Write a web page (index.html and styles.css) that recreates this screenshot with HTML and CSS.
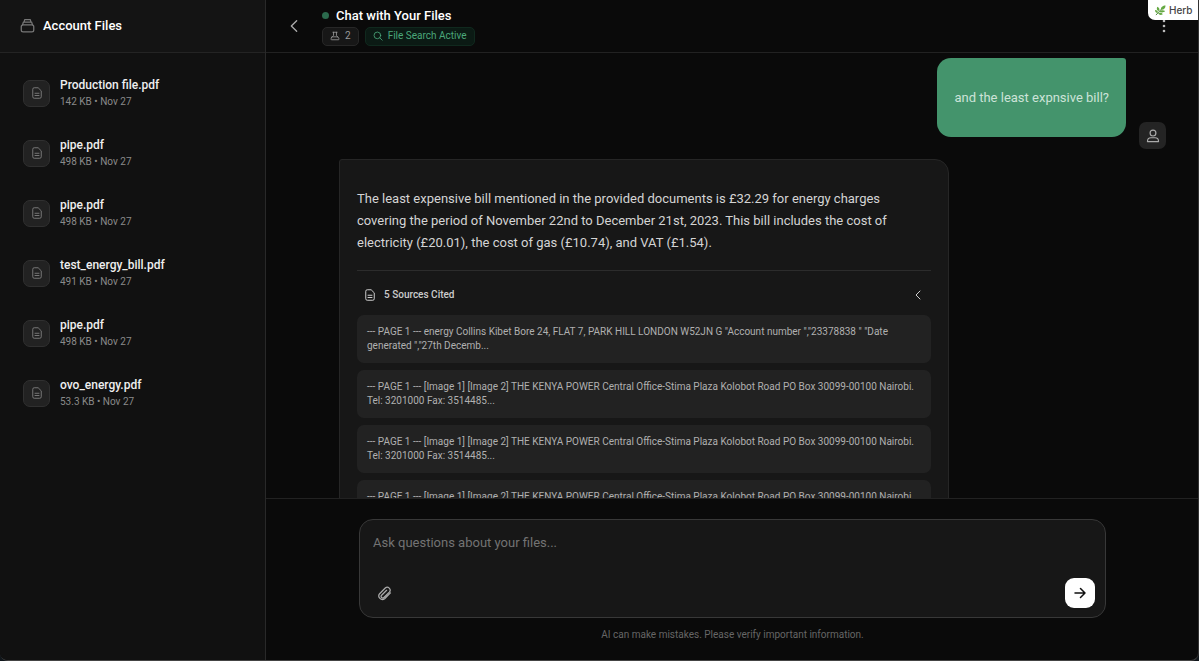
FILE: index.html
```html
<!DOCTYPE html>
<html lang="en">
<head>
<meta charset="utf-8">
<meta name="viewport" content="width=device-width, initial-scale=1">
<title>Chat with Your Files</title>
<link rel="stylesheet" href="styles.css">
</head>
<body>
<svg class="sprite" aria-hidden="true">
  <symbol id="doc" viewBox="0 0 24 24"><path d="M13.500 1.500H6.500a3 3 0 0 0-3 3v15a3 3 0 0 0 3 3h11a3 3 0 0 0 3-3v-11zM8 12.500h8M8 17h8"/></symbol>
  <symbol id="left" viewBox="0 0 24 24"><path d="M16 4L8 12l8 8"/></symbol>
</svg>
<div class="app">
  <aside class="sidebar">
    <header class="sidebar-head">
      <svg class="icon stack" viewBox="0 0 24 24"><rect x="2" y="11" width="20" height="11" rx="3"/><path d="M4 11l1.500-4.500h13L20 11M6.500 6.500l1-4h9l1 4"/></svg>
      <h2>Account Files</h2>
    </header>
    <ul class="files">
      <li class="file"><span class="file-icon"><svg class="icon"><use href="#doc"/></svg></span><div><p class="file-name">Production file.pdf</p><p class="file-meta">142 KB • Nov 27</p></div></li>
      <li class="file"><span class="file-icon"><svg class="icon"><use href="#doc"/></svg></span><div><p class="file-name">pipe.pdf</p><p class="file-meta">498 KB • Nov 27</p></div></li>
      <li class="file"><span class="file-icon"><svg class="icon"><use href="#doc"/></svg></span><div><p class="file-name">pipe.pdf</p><p class="file-meta">498 KB • Nov 27</p></div></li>
      <li class="file"><span class="file-icon"><svg class="icon"><use href="#doc"/></svg></span><div><p class="file-name">test_energy_bill.pdf</p><p class="file-meta">491 KB • Nov 27</p></div></li>
      <li class="file"><span class="file-icon"><svg class="icon"><use href="#doc"/></svg></span><div><p class="file-name">pipe.pdf</p><p class="file-meta">498 KB • Nov 27</p></div></li>
      <li class="file"><span class="file-icon"><svg class="icon"><use href="#doc"/></svg></span><div><p class="file-name">ovo_energy.pdf</p><p class="file-meta">53.3 KB • Nov 27</p></div></li>
    </ul>
  </aside>
  <main class="chat">
    <header class="chat-head">
      <button class="plain back" type="button" aria-label="Back"><svg class="icon"><use href="#left"/></svg></button>
      <div class="heading">
        <h1><span class="status"></span>Chat with Your Files</h1>
        <div class="badges">
          <span class="badge"><svg class="icon" viewBox="0 0 24 24"><path d="M7 3h10M8.500 3v7c0 2-1.500 3-3 4M15.500 3v7c0 2 1.500 3 3 4M5 14h14l2.500 4.500c.7 1.300 0 2.500-1.500 2.500H4c-1.500 0-2.200-1.200-1.500-2.500z"/></svg>2</span>
          <span class="badge active"><svg class="icon" viewBox="0 0 24 24"><circle cx="10.500" cy="10.500" r="8"/><path d="M16.500 16.500L22 22"/></svg>File Search Active</span>
        </div>
      </div>
      <button class="plain more" type="button" aria-label="More options"><svg viewBox="0 0 4 16"><circle cx="2" cy="3" r="1.300"/><circle cx="2" cy="8" r="1.300"/><circle cx="2" cy="13" r="1.300"/></svg></button>
    </header>
    <section class="messages">
      <div class="message user">
        <p class="bubble">and the least expnsive bill?</p>
        <span class="avatar"><svg class="icon" viewBox="0 0 24 24"><circle cx="12" cy="7" r="5"/><path d="M2.500 21.500c0-4.500 3-6.500 6-6.500h7c3 0 6 2 6 6.500z"/></svg></span>
      </div>
      <article class="answer">
        <p class="answer-text">The least expensive bill mentioned in the provided documents is £32.29 for energy charges covering the period of November 22nd to December 21st, 2023. This bill includes the cost of electricity (£20.01), the cost of gas (£10.74), and VAT (£1.54).</p>
        <div class="sources">
          <button class="plain sources-head" type="button"><svg class="icon"><use href="#doc"/></svg><span>5 Sources Cited</span><svg class="icon"><use href="#left"/></svg></button>
          <ul class="source-list">
            <li>--- PAGE 1 --- energy Collins Kibet Bore 24, FLAT 7, PARK HILL LONDON W52JN G "Account number ","23378838 " "Date generated ","27th Decemb...</li>
            <li>--- PAGE 1 --- [Image 1] [Image 2] THE KENYA POWER Central Office-Stima Plaza Kolobot Road PO Box 30099-00100 Nairobi. Tel: 3201000 Fax: 3514485...</li>
            <li>--- PAGE 1 --- [Image 1] [Image 2] THE KENYA POWER Central Office-Stima Plaza Kolobot Road PO Box 30099-00100 Nairobi. Tel: 3201000 Fax: 3514485...</li>
            <li>--- PAGE 1 --- [Image 1] [Image 2] THE KENYA POWER Central Office-Stima Plaza Kolobot Road PO Box 30099-00100 Nairobi. Tel: 3201000 Fax: 3514485...</li>
          </ul>
        </div>
      </article>
    </section>
    <footer class="foot">
      <form class="composer">
        <textarea aria-label="Message" rows="1" placeholder="Ask questions about your files..."></textarea>
        <div class="tools">
          <button class="plain attach" type="button" aria-label="Attach file"><svg class="icon" viewBox="0 0 24 24"><path d="M21.500 11l-9.300 9.300a5.700 5.700 0 0 1-8-8l9-9a4.600 4.600 0 0 1 6.500 6.500l-8.700 8.700a2.500 2.500 0 0 1-3.600-3.600l8-8"/></svg></button>
          <button class="send" type="button" aria-label="Send"><svg class="icon" viewBox="0 0 24 24"><path d="M2 12h20M13 3l9 9-9 9"/></svg></button>
        </div>
      </form>
      <p class="notice">AI can make mistakes. Please verify important information.</p>
    </footer>
  </main>
  <div class="tag"><svg viewBox="0 0 24 24"><path class="stem" d="M2 22L15 8"/><path class="leaf" d="M13 10C12 5 17 1 23 1c0 6-4 10-10 9zM9 13C4 13 3 8 5 4c4 2 6 5 4 9zM10 14c3-4 9-3 12-1-3 4-9 4-12 1zM6 17c-4 1-6-2-6-6 4 0 7 2 6 6zM7 18c3-2 8-1 10 2-4 3-8 2-10-2z"/></svg>Herb</div>
</div>
</body>
</html>
```
FILE: styles.css
```css
* { box-sizing: border-box; }
body { margin: 0; background: #10161b; color: #eee; font-family: Roboto, "Liberation Sans", sans-serif; }
h1, h2, p, ul { margin: 0; padding: 0; }
ul { list-style: none; }
button, textarea { font: inherit; color: inherit; }
.sprite { position: absolute; width: 0; height: 0; }
.icon { flex: none; width: 12px; height: 12px; fill: none; stroke: currentColor; stroke-width: 2; stroke-linecap: round; stroke-linejoin: round; }
.plain { display: flex; align-items: center; padding: 0; border: 0; background: none; cursor: pointer; }

.app { position: relative; display: grid; grid-template-columns: 266px minmax(0, 1fr); height: 100vh; overflow: hidden; background: #0a0a0a; border-bottom: 1px solid #444; border-right: 1px solid #333; border-radius: 0 0 8px 8px; }

.sidebar { background: #111; border-right: 1px solid #292929; }
.sidebar-head { display: flex; align-items: center; gap: 8px; height: 53px; padding: 0 20px 1px; background: #141414; border-bottom: 1px solid #242424; }
.sidebar-head h2 { font-size: 13px; line-height: 18px; font-weight: 500; color: #fff; }
.stack { width: 15px; height: 15px; color: #777; }
.files { padding: 10px 23px; }
.file { display: flex; align-items: center; gap: 10px; height: 60px; }
.file-icon { display: grid; place-items: center; width: 27px; height: 27px; background: #222; border: 1px solid #303030; border-radius: 7px; color: #777; }
.file-name { font-size: 12px; line-height: 17px; font-weight: 500; color: #eee; }
.file-meta { font-size: 10px; line-height: 16px; color: #8a8a8a; }

.chat { display: flex; flex-direction: column; min-width: 0; height: 100%; min-height: 0; }
.chat-head { display: flex; flex: none; align-items: center; height: 53px; padding: 0 32px 0 20px; border-bottom: 1px solid #222; }
.back { width: 36px; color: #aaa; }
.back .icon { width: 16px; height: 16px; }
.heading { display: grid; gap: 2px; flex: 1; }
.heading h1 { display: flex; align-items: center; gap: 7px; font-size: 13px; line-height: 18px; font-weight: 500; color: #fff; }
.status { width: 7px; height: 7px; border-radius: 50%; background: #2b6a4d; }
.badges { display: flex; gap: 6px; }
.badge { display: flex; align-items: center; gap: 5px; height: 19px; padding: 0 7px; border: 1px solid #272727; border-radius: 5px; background: #171717; color: #999; font-size: 10px; line-height: 16px; }
.badge .icon { width: 10px; height: 10px; }
.badge.active { border-color: #10291e; background: #0b1a14; color: #4aa77a; }
.more svg { width: 4px; height: 16px; fill: #bbb; }

.messages { flex: 1; min-height: 0; padding: 5px 32px 0 33px; overflow: hidden; }
.message { display: flex; align-items: flex-end; justify-content: flex-end; gap: 13px; height: 91px; }
.bubble { align-self: flex-start; padding: 28px 17px; border-radius: 14px 3px 14px 14px; background: #44946c; color: #cde3d8; font-size: 13px; line-height: 23px; }
.avatar { display: grid; place-items: center; width: 27px; height: 27px; border-radius: 7px; background: #242424; color: #aaa; }
.avatar .icon { width: 14px; height: 14px; }
.answer { width: 610px; max-width: 100%; margin: 10px 0 0 40px; padding: 28px 17px; background: #171717; border: 1px solid #262626; border-radius: 3px 14px 14px 14px; }
.answer-text { padding-right: 20px; font-size: 13px; line-height: 22px; color: #d4d4d4; }
.sources { margin-top: 16px; border-top: 1px solid #2c2c2c; }
.sources-head { width: 100%; gap: 8px; height: 44px; padding: 3px 7px 0; color: #ccc; font-size: 10px; font-weight: 500; }
.sources-head span { flex: 1; text-align: left; }
.source-list { display: grid; gap: 7px; }
.source-list li { padding: 10px; border-radius: 7px; background: #222; color: #b0b0b0; font-size: 10px; line-height: 14px; }

.foot { flex: none; padding: 20px 92px 17px 93px; border-top: 1px solid #222; }
.composer { height: 99px; padding: 12px 10px 9px 13px; display: flex; flex-direction: column; justify-content: space-between; background: #171717; border: 1px solid #383838; border-radius: 14px; }
textarea { display: block; width: 100%; height: 22px; padding: 0; border: 0; outline: 0; resize: none; overflow: hidden; background: none; font-size: 13px; line-height: 22px; }
textarea::placeholder { color: #737373; }
.tools { display: flex; align-items: center; justify-content: space-between; padding-left: 4px; }
.attach { color: #aaa; }
.attach .icon { width: 15px; height: 15px; }
.send { display: grid; place-items: center; width: 30px; height: 30px; padding: 0; border: 0; border-radius: 9px; background: #fff; color: #111; cursor: pointer; }
.send .icon { stroke-width: 3; }
.notice { margin-top: 9px; text-align: center; color: #666; font-size: 10px; line-height: 16px; }

.tag { position: absolute; top: 0; right: -1px; display: flex; align-items: center; gap: 3px; width: 51px; height: 20px; padding-left: 7px; border-radius: 0 0 0 7px; background: #fff; color: #444; font-family: Inter, sans-serif; font-size: 10px; font-weight: 500; }
.tag svg { flex: none; width: 11px; height: 11px; }
.leaf { fill: #65a943; }
.stem { fill: none; stroke: #3f7e30; stroke-width: 2; }
```
